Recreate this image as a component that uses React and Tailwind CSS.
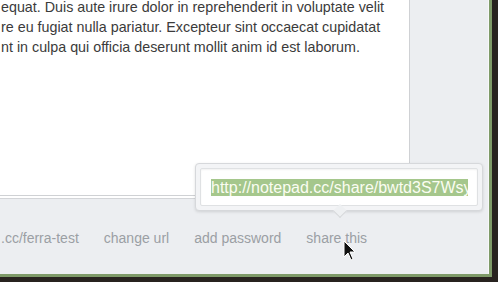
import { useState } from 'react'

const LINES = [
  'equat. Duis aute irure dolor in reprehenderit in voluptate velit',
  're eu fugiat nulla pariatur. Excepteur sint occaecat cupidatat',
  'nt in culpa qui officia deserunt mollit anim id est laborum.',
]

const LINKS = ['.cc/ferra-test', 'change url', 'add password', 'share this']

function Cursor() {
  return (
    <svg width="13" height="21" viewBox="0 0 13 21" className="absolute left-[343px] top-[240px]">
      <path d="M1 1 L1 17 L5 13 L8 20 L10 19 L7 12 L12 12 Z" fill="#111" stroke="#fff" strokeWidth="1" strokeLinejoin="round" />
    </svg>
  )
}

export default function App() {
  const [url] = useState('http://notepad.cc/share/bwtd3S7Wsy')

  return (
    <div className="w-[498px] h-[282px] bg-[#28231f] overflow-hidden font-['Liberation_Sans',Arial,sans-serif]">
      <div className="relative w-[492px] h-[277px] bg-[#eceef1] border-r-[3px] border-b-[3px] border-[#7e9a68] shadow-[inset_-1px_0_0_#f7f8f9]">
        <div className="flex">
          <div className="w-[410px] flex flex-col">
            <div className="h-[196px] bg-white border-r border-b border-[#cfd1d4] overflow-hidden">
              <div className="-mt-[3px] pl-[1px] text-[14.3px] leading-[20px] text-[#3b3b3b] whitespace-nowrap">
                {LINES.map((l) => (
                  <div key={l}>{l}</div>
                ))}
              </div>
            </div>
            <div className="h-[3px] bg-white border-b border-r border-[#d3d5d8]" />
          </div>
        </div>

        <div className="flex gap-[25px] pl-[1px] pt-[31px] text-[14px] leading-[16px] text-[#9b9fa4] whitespace-nowrap">
          {LINKS.map((l) => (
            <span key={l}>{l}</span>
          ))}
        </div>

        <div className="absolute left-[195px] top-[163px] w-[288px] h-[48px] p-[4px] bg-[#f3f4f6] border border-[#d6d8db] rounded-[4px] shadow-[0_1px_3px_rgba(0,0,0,0.12)]">
          <div className="h-full bg-white border border-[#dfe1e3] rounded-[2px] shadow-[inset_0_1px_2px_rgba(0,0,0,0.06)] pl-[10px] pr-[9px] flex items-center overflow-hidden">
            <div className="overflow-hidden whitespace-nowrap text-[16px] leading-[17px]">
              <span className="bg-[#a5c78c] text-[#fbfdf2]">{url}</span>
            </div>
          </div>
          <div className="absolute left-[139px] -bottom-[6px] w-[10px] h-[10px] rotate-45 bg-[#eef0f2] border-r border-b border-[#d6d8db]" />
        </div>

        <Cursor />
      </div>
    </div>
  )
}
